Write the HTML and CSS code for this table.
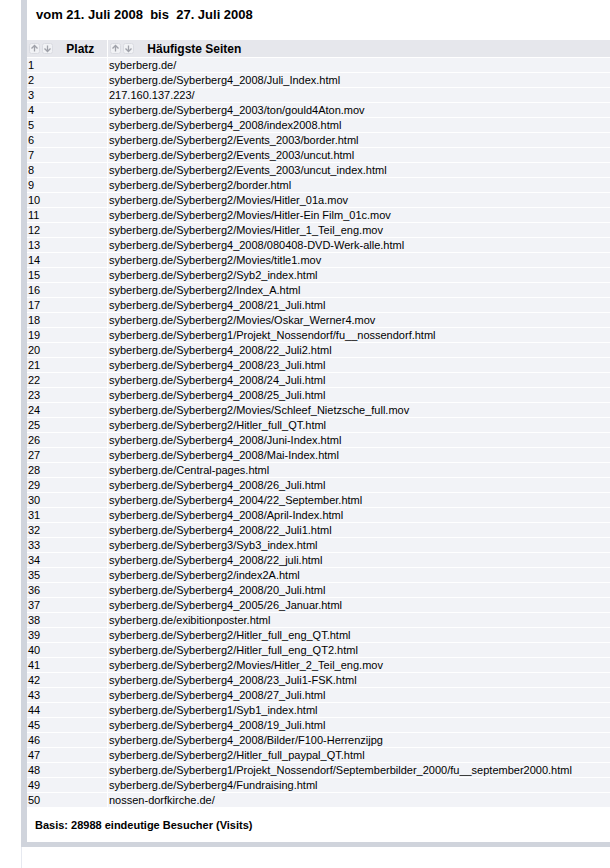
FILE: index.html
```html
<!DOCTYPE html>
<html lang="de">
<head>
  <meta charset="UTF-8" />
  <title>Häufigste Seiten</title>
  <link rel="stylesheet" href="styles.css">
</head>
<body>
<div class="page">
  <div class="frame">
    <h2 class="range">vom 21. Juli 2008 &nbsp;bis &nbsp;27. Juli 2008</h2>

    <table class="stats">
      <thead>
        <tr>
          <th class="col-rank">
            <span class="sorter">
              <svg width="11" height="11" viewBox="0 0 11 11"><rect x="0.5" y="0.5" width="10" height="10" rx="2" fill="#f1f2f5" stroke="#dadce2"/><path d="M5.5 2.5v6M2.5 5.5l3-3 3 3" fill="none" stroke="#9fa1a9" stroke-width="1.3"/></svg>
              <svg width="11" height="11" viewBox="0 0 11 11"><rect x="0.5" y="0.5" width="10" height="10" rx="2" fill="#f1f2f5" stroke="#dadce2"/><path d="M5.5 2.5v6M2.5 5.5l3 3 3-3" fill="none" stroke="#9fa1a9" stroke-width="1.3"/></svg>
            </span>
            Platz
          </th>
          <th class="col-page">
            <span class="sorter">
              <svg width="11" height="11" viewBox="0 0 11 11"><rect x="0.5" y="0.5" width="10" height="10" rx="2" fill="#f1f2f5" stroke="#dadce2"/><path d="M5.5 2.5v6M2.5 5.5l3-3 3 3" fill="none" stroke="#9fa1a9" stroke-width="1.3"/></svg>
              <svg width="11" height="11" viewBox="0 0 11 11"><rect x="0.5" y="0.5" width="10" height="10" rx="2" fill="#f1f2f5" stroke="#dadce2"/><path d="M5.5 2.5v6M2.5 5.5l3 3 3-3" fill="none" stroke="#9fa1a9" stroke-width="1.3"/></svg>
            </span>
            Häufigste Seiten
          </th>
        </tr>
      </thead>
      <tbody>
        <tr><td>1</td><td>syberberg.de/</td></tr>
        <tr><td>2</td><td>syberberg.de/Syberberg4_2008/Juli_Index.html</td></tr>
        <tr><td>3</td><td>217.160.137.223/</td></tr>
        <tr><td>4</td><td>syberberg.de/Syberberg4_2003/ton/gould4Aton.mov</td></tr>
        <tr><td>5</td><td>syberberg.de/Syberberg4_2008/index2008.html</td></tr>
        <tr><td>6</td><td>syberberg.de/Syberberg2/Events_2003/border.html</td></tr>
        <tr><td>7</td><td>syberberg.de/Syberberg2/Events_2003/uncut.html</td></tr>
        <tr><td>8</td><td>syberberg.de/Syberberg2/Events_2003/uncut_index.html</td></tr>
        <tr><td>9</td><td>syberberg.de/Syberberg2/border.html</td></tr>
        <tr><td>10</td><td>syberberg.de/Syberberg2/Movies/Hitler_01a.mov</td></tr>
        <tr><td>11</td><td>syberberg.de/Syberberg2/Movies/Hitler-Ein Film_01c.mov</td></tr>
        <tr><td>12</td><td>syberberg.de/Syberberg2/Movies/Hitler_1_Teil_eng.mov</td></tr>
        <tr><td>13</td><td>syberberg.de/Syberberg4_2008/080408-DVD-Werk-alle.html</td></tr>
        <tr><td>14</td><td>syberberg.de/Syberberg2/Movies/title1.mov</td></tr>
        <tr><td>15</td><td>syberberg.de/Syberberg2/Syb2_index.html</td></tr>
        <tr><td>16</td><td>syberberg.de/Syberberg2/Index_A.html</td></tr>
        <tr><td>17</td><td>syberberg.de/Syberberg4_2008/21_Juli.html</td></tr>
        <tr><td>18</td><td>syberberg.de/Syberberg2/Movies/Oskar_Werner4.mov</td></tr>
        <tr><td>19</td><td>syberberg.de/Syberberg1/Projekt_Nossendorf/fu__nossendorf.html</td></tr>
        <tr><td>20</td><td>syberberg.de/Syberberg4_2008/22_Juli2.html</td></tr>
        <tr><td>21</td><td>syberberg.de/Syberberg4_2008/23_Juli.html</td></tr>
        <tr><td>22</td><td>syberberg.de/Syberberg4_2008/24_Juli.html</td></tr>
        <tr><td>23</td><td>syberberg.de/Syberberg4_2008/25_Juli.html</td></tr>
        <tr><td>24</td><td>syberberg.de/Syberberg2/Movies/Schleef_Nietzsche_full.mov</td></tr>
        <tr><td>25</td><td>syberberg.de/Syberberg2/Hitler_full_QT.html</td></tr>
        <tr><td>26</td><td>syberberg.de/Syberberg4_2008/Juni-Index.html</td></tr>
        <tr><td>27</td><td>syberberg.de/Syberberg4_2008/Mai-Index.html</td></tr>
        <tr><td>28</td><td>syberberg.de/Central-pages.html</td></tr>
        <tr><td>29</td><td>syberberg.de/Syberberg4_2008/26_Juli.html</td></tr>
        <tr><td>30</td><td>syberberg.de/Syberberg4_2004/22_September.html</td></tr>
        <tr><td>31</td><td>syberberg.de/Syberberg4_2008/April-Index.html</td></tr>
        <tr><td>32</td><td>syberberg.de/Syberberg4_2008/22_Juli1.html</td></tr>
        <tr><td>33</td><td>syberberg.de/Syberberg3/Syb3_index.html</td></tr>
        <tr><td>34</td><td>syberberg.de/Syberberg4_2008/22_juli.html</td></tr>
        <tr><td>35</td><td>syberberg.de/Syberberg2/index2A.html</td></tr>
        <tr><td>36</td><td>syberberg.de/Syberberg4_2008/20_Juli.html</td></tr>
        <tr><td>37</td><td>syberberg.de/Syberberg4_2005/26_Januar.html</td></tr>
        <tr><td>38</td><td>syberberg.de/exibitionposter.html</td></tr>
        <tr><td>39</td><td>syberberg.de/Syberberg2/Hitler_full_eng_QT.html</td></tr>
        <tr><td>40</td><td>syberberg.de/Syberberg2/Hitler_full_eng_QT2.html</td></tr>
        <tr><td>41</td><td>syberberg.de/Syberberg2/Movies/Hitler_2_Teil_eng.mov</td></tr>
        <tr><td>42</td><td>syberberg.de/Syberberg4_2008/23_Juli1-FSK.html</td></tr>
        <tr><td>43</td><td>syberberg.de/Syberberg4_2008/27_Juli.html</td></tr>
        <tr><td>44</td><td>syberberg.de/Syberberg1/Syb1_index.html</td></tr>
        <tr><td>45</td><td>syberberg.de/Syberberg4_2008/19_Juli.html</td></tr>
        <tr><td>46</td><td>syberberg.de/Syberberg4_2008/Bilder/F100-Herrenzijpg</td></tr>
        <tr><td>47</td><td>syberberg.de/Syberberg2/Hitler_full_paypal_QT.html</td></tr>
        <tr><td>48</td><td>syberberg.de/Syberberg1/Projekt_Nossendorf/Septemberbilder_2000/fu__september2000.html</td></tr>
        <tr><td>49</td><td>syberberg.de/Syberberg4/Fundraising.html</td></tr>
        <tr><td>50</td><td>nossen-dorfkirche.de/</td></tr>
      </tbody>
    </table>

    <p class="basis">Basis: 28988 eindeutige Besucher (Visits)</p>
  </div>
</div>
</body>
</html>
```

FILE: styles.css
```css
html, body {
  margin: 0;
  padding: 0;
  background: #fff;
  overflow: hidden;
}
body {
  font-family: "Liberation Sans", Arial, sans-serif;
  color: #000;
}
.page {
  margin-left: 21px;
  border-left: 1px solid #e6e9f0;
  min-height: 100vh;
}
.frame {
  margin-left: -1px;
  border-left: 6px solid #d0d4dc;
  border-bottom: 5px solid #d0d4dc;
  background: #fff;
}
.range {
  margin: 0 0 17px;
  padding: 7px 0 0 9px;
  font-size: 13px;
  line-height: 16px;
  font-weight: bold;
}
.stats {
  width: 100%;
  border-collapse: collapse;
  font-size: 11px;
}
.stats th {
  height: 17px;
  padding: 0 0 0 2px;
  background: #e6e7ec;
  border-bottom: 1px solid #fff;
  font-size: 12px;
  text-align: left;
  white-space: nowrap;
}
.stats td {
  height: 14px;
  line-height: 14px;
  padding: 0 1px;
  background: #f2f3f7;
  border-bottom: 1px solid #fff;
  white-space: nowrap;
}
.stats th + th,
.stats td + td {
  border-left: 1px solid #fff;
}
.col-rank {
  width: 78px;
}
.sorter {
  display: inline-flex;
  gap: 2px;
  margin-right: 10px;
  vertical-align: -1px;
}
.sorter svg {
  display: block;
}
.basis {
  margin: 0;
  padding: 11px 0 10px 8px;
  font-size: 11px;
  line-height: 13px;
  font-weight: bold;
}
```
